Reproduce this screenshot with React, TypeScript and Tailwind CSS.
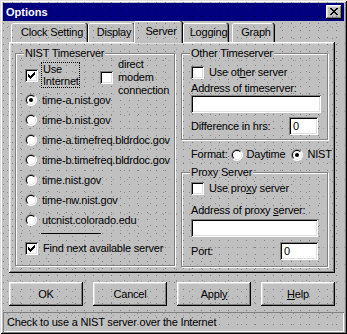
import React from "react";

const PAT =
  "bg-[#c0c0c0] bg-fixed [background-image:conic-gradient(at_1px_1px,transparent_270deg,#7d7d7d_0),conic-gradient(at_1px_1px,transparent_270deg,#8c8c8c_0),conic-gradient(at_1px_1px,transparent_270deg,#9c9c9c_0)] [background-size:9px_7px,13px_11px,7px_17px] [background-position:3px_2px,7px_5px,1px_9px]";
const TITLEPAT =
  "bg-[#000080] bg-fixed [background-image:conic-gradient(at_1px_1px,transparent_270deg,#00002a_0),conic-gradient(at_1px_1px,transparent_270deg,#000040_0)] [background-size:9px_7px,13px_11px] [background-position:3px_2px,7px_5px]";
const RAISED =
  "shadow-[inset_-1px_-1px_#000,inset_1px_1px_#fff,inset_-2px_-2px_#808080,inset_2px_2px_#dfdfdf]";
const SUNKEN =
  "shadow-[inset_1px_1px_#808080,inset_-1px_-1px_#fff,inset_2px_2px_#000,inset_-2px_-2px_#dfdfdf]";
const TAB =
  "shadow-[inset_-1px_0_#000,inset_-2px_0_#808080,inset_1px_0_#fff,inset_0_1px_#fff] rounded-t-[2px] flex items-center justify-center pl-[5px]";
const FONT =
  "font-['Liberation_Sans',Arial,sans-serif] text-[11px] leading-[13px] tracking-[-0.2px] text-black";

function Check({ checked = false }: { checked?: boolean }) {
  return (
    <span className={`relative block w-[13px] h-[13px] shrink-0 bg-white ${SUNKEN}`}>
      {checked && (
        <svg
          className="absolute left-0 top-0"
          width={13}
          height={13}
          viewBox="0 0 13 13"
          shapeRendering="crispEdges"
        >
          <path
            d="M9 3h1v1h-1zM8 4h2v1h-2zM3 5h1v1h-1zM7 5h3v1h-3zM3 6h2v1h-2zM6 6h3v1h-3zM3 7h5v1h-5zM4 8h3v1h-3zM5 9h1v1h-1z"
            fill="#000"
          />
        </svg>
      )}
    </span>
  );
}

function Radio({ checked = false }: { checked?: boolean }) {
  return (
    <svg width={12} height={12} viewBox="0 0 12 12" className="block shrink-0">
      <circle cx={6} cy={6} r={6} fill="#fff" />
      <path d="M1.757 10.243 A6 6 0 0 1 10.243 1.757 Z" fill="#808080" />
      <circle cx={6} cy={6} r={5} fill="#dfdfdf" />
      <path d="M2.464 9.536 A5 5 0 0 1 9.536 2.464 Z" fill="#000" />
      <circle cx={6} cy={6} r={4} fill="#fff" />
      {checked && <circle cx={6} cy={6} r={2} fill="#000" />}
    </svg>
  );
}

function Group({
  label,
  className,
  children,
}: {
  label: string;
  className: string;
  children?: React.ReactNode;
}) {
  return (
    <div
      className={`relative border border-[#808080] shadow-[inset_1px_1px_#fff,1px_1px_#fff] ${className}`}
    >
      <span className={`absolute -top-[7px] left-[8px] px-[1px] h-[13px] ${PAT}`}>{label}</span>
      {children}
    </div>
  );
}

function RadioRow({ label, checked = false }: { label: string; checked?: boolean }) {
  return (
    <div className="h-[20px] flex items-center pl-[9px] gap-[5px]">
      <Radio checked={checked} />
      <span>{label}</span>
    </div>
  );
}

function TextBox({ className, value = "" }: { className: string; value?: string }) {
  return (
    <div className={`bg-white ${SUNKEN} flex items-center pl-[4px] ${className}`}>{value}</div>
  );
}

function Button({ children }: { children: React.ReactNode }) {
  return (
    <div className={`w-[74px] h-[24px] ${RAISED} flex items-center justify-center`}>{children}</div>
  );
}

export default function App() {
  return (
    <div
      className={`w-[347px] h-[334px] ${PAT} ${FONT} shadow-[inset_1px_1px_#dfdfdf,inset_-1px_-1px_#000,inset_2px_2px_#fff,inset_-2px_-2px_#808080] pt-[3px] px-[3px] pb-[2px] flex flex-col overflow-hidden`}
    >
      {/* Title bar */}
      <div className={`h-[18px] ${TITLEPAT} flex items-center justify-between pl-[3px] pr-[2px]`}>
        <span className="text-white font-bold tracking-normal">Options</span>
        <div className={`w-[16px] h-[14px] ${PAT} ${RAISED} relative`}>
          <svg
            className="absolute left-[4px] top-[3px]"
            width={8}
            height={7}
            viewBox="0 0 8 7"
            shapeRendering="crispEdges"
          >
            <path
              d="M0 0h2v1h-2zM6 0h2v1h-2zM1 1h2v1h-2zM5 1h2v1h-2zM2 2h4v1h-4zM3 3h2v1h-2zM2 4h4v1h-4zM1 5h2v1h-2zM5 5h2v1h-2zM0 6h2v1h-2zM6 6h2v1h-2z"
              fill="#000"
            />
          </svg>
        </div>
      </div>

      {/* Body */}
      <div className="flex flex-col px-[6px]">
        {/* Tabs */}
        <div className="h-[21px] flex items-end">
          <div className={`ml-[2px] w-[77px] h-[19px] ${PAT} ${TAB}`}>Clock Setting</div>
          <div className={`w-[47px] h-[19px] ${PAT} ${TAB}`}>Display</div>
          <div className={`relative z-10 -ml-[1px] w-[49px] h-[22px] -mb-[1px] pb-[2px] ${PAT} ${TAB}`}>
            Server
          </div>
          <div className={`w-[46px] h-[19px] ${PAT} ${TAB}`}>Logging</div>
          <div className={`ml-[3px] w-[43px] h-[19px] ${PAT} ${TAB}`}>Graph</div>
        </div>

        {/* Panel */}
        <div
          className={`w-[326px] h-[231px] ${RAISED} flex items-start pt-[11px] pl-[6px] gap-[6px]`}
        >
          {/* NIST Timeserver */}
          <Group label="NIST Timeserver" className="w-[160px] h-[213px] flex flex-col">
            <div className="mt-[4px] h-[32px] flex items-start">
              <div className="ml-[9px] mt-[11px]">
                <Check checked />
              </div>
              <div className="ml-[3px] mt-[4px] w-[39px] h-[26px] border border-dotted border-black pl-[1px] leading-[12px]">
                Use
                <br />
                Internet
              </div>
              <div className="ml-[20px] mt-[13px]">
                <Check />
              </div>
              <div className="ml-[5px] leading-[13px]">
                direct
                <br />
                modem
                <br />
                connection
              </div>
            </div>
            <RadioRow label="time-a.nist.gov" checked />
            <RadioRow label="time-b.nist.gov" />
            <RadioRow label="time-a.timefreq.bldrdoc.gov" />
            <RadioRow label="time-b.timefreq.bldrdoc.gov" />
            <RadioRow label="time.nist.gov" />
            <RadioRow label="time-nw.nist.gov" />
            <RadioRow label="utcnist.colorado.edu" />
            <div className="mt-[3px] ml-[25px] w-[60px] h-[1px] bg-black" />
            <div className="mt-[8px] h-[13px] flex items-center pl-[9px] gap-[5px]">
              <Check checked />
              <span>Find next available server</span>
            </div>
          </Group>

          {/* Right column */}
          <div className="flex flex-col">
            <Group label="Other Timeserver" className="w-[147px] h-[87px] flex flex-col pl-[9px]">
              <div className="mt-[12px] h-[13px] flex items-center gap-[5px]">
                <Check />
                <span>
                  Use ot<span className="underline underline-offset-[1px]">h</span>er server
                </span>
              </div>
              <div className="mt-[3px] h-[13px]">Address of timeserver:</div>
              <TextBox className="w-[130px] h-[18px]" />
              <div className="mt-[4px] w-[127px] h-[18px] flex items-center justify-between">
                <span>Difference in hrs:</span>
                <TextBox className="w-[29px] h-[18px]" value="0" />
              </div>
            </Group>

            <div className="mt-[8px] h-[13px] flex items-center pl-[10px]">
              <span>Format:</span>
              <span className="ml-[3px]">
                <Radio />
              </span>
              <span className="ml-[4px]">Daytime</span>
              <span className="ml-[6px]">
                <Radio checked />
              </span>
              <span className="ml-[4px]">NIST</span>
            </div>

            <Group label="Proxy Server" className="mt-[11px] w-[147px] h-[95px] flex flex-col pl-[9px]">
              <div className="mt-[9px] h-[13px] flex items-center gap-[5px]">
                <Check />
                <span>
                  Use pro<span className="underline underline-offset-[1px]">x</span>y server
                </span>
              </div>
              <div className="mt-[9px] h-[13px]">
                Address of proxy <span className="underline underline-offset-[1px]">s</span>erver:
              </div>
              <TextBox className="mt-[2px] w-[127px] h-[18px]" />
              <div className="mt-[5px] w-[127px] h-[18px] flex items-center justify-between">
                <span>Port:</span>
                <TextBox className="w-[38px] h-[18px]" value="0" />
              </div>
            </Group>
          </div>
        </div>

        {/* Buttons */}
        <div className="mt-[9px] w-[326px] flex justify-between">
          <Button>OK</Button>
          <Button>Cancel</Button>
          <Button>
            Appl<span className="underline underline-offset-[1px]">y</span>
          </Button>
          <Button>
            <span className="underline underline-offset-[1px]">H</span>elp
          </Button>
        </div>
      </div>

      {/* Status bar */}
      <div className="mt-[6px] h-[20px] shadow-[inset_1px_1px_#808080,inset_-1px_-1px_#fff] flex items-center pl-[4px]">
        Check to use a NIST server over the Internet
      </div>
    </div>
  );
}
